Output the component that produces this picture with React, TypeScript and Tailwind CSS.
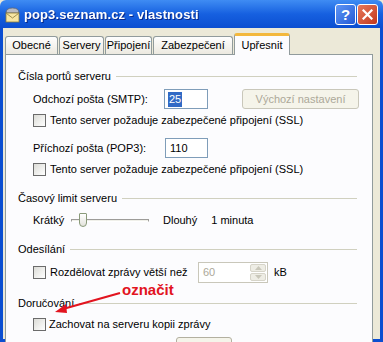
import React from 'react';

const font = { fontFamily: '"Liberation Sans", Arial, sans-serif' };

const Checkbox: React.FC = () => (
  <span className="inline-block w-[13px] h-[13px] border border-[#6b6b6b] bg-gradient-to-br from-[#dcdcd7] to-[#ffffff] shrink-0" />
);

const GroupLabel: React.FC<{ text: string; mt: string }> = ({ text, mt }) => (
  <div className={`flex items-center h-[18px] pl-[12px] pr-[15px] ${mt}`}>
    <span className="text-black pr-[5px] whitespace-nowrap">{text}</span>
    <span className="flex-1 h-px bg-[#d0d0bf]" />
  </div>
);

const Tab: React.FC<{ label: string; selected?: boolean; w: string }> = ({ label, selected, w }) =>
  selected ? (
    <div className={`${w} h-[22px] -mb-px relative z-10 bg-[#fcfcfe] border border-b-0 border-[#919b9c] border-t-[3px] border-t-[#f3b83d] rounded-t-[3px] flex items-center justify-center text-black`}>
      {label}
    </div>
  ) : (
    <div className={`${w} h-[18px] mt-[4px] bg-gradient-to-b from-[#fefefe] to-[#ece9e0] border border-b-0 border-[#919b9c] rounded-t-[3px] flex items-center justify-center text-black`}>
      {label}
    </div>
  );

export default function App() {
  return (
    <div style={font} className="w-[383px] h-[342px] overflow-hidden relative bg-[#ece9d8] text-[11px] leading-none select-none">
      {/* title bar */}
      <div className="h-[28px] flex items-center bg-gradient-to-b from-[#3f8cf3] via-[#1660e0] to-[#0b4ed1] rounded-t-[6px] pl-[4px] pr-[5px]">
        <svg width="17" height="17" viewBox="0 0 17 17" className="shrink-0">
          <path d="M2 7 Q2 2 8.5 2 Q15 2 15 7 Z" fill="#b9bcc4" stroke="#5d6470" strokeWidth="0.8" />
          <rect x="2" y="7" width="13" height="9" fill="#f7e6a2" stroke="#8a7a3a" strokeWidth="0.8" />
          <path d="M2.4 7.4 L8.5 12 L14.6 7.4" fill="none" stroke="#8a7a3a" strokeWidth="0.8" />
        </svg>
        <span className="ml-[3px] text-white font-bold text-[13px] tracking-[0.1px] drop-shadow-[1px_1px_0_#0a2a8a]">
          pop3.seznam.cz - vlastnosti
        </span>
        <div className="ml-auto flex gap-[1px]">
          <div className="w-[21px] h-[21px] rounded-[3px] border border-white bg-gradient-to-br from-[#5f96f5] to-[#2459d5] flex items-center justify-center text-white font-bold text-[15px]">
            ?
          </div>
          <div className="w-[21px] h-[21px] rounded-[3px] border border-white bg-gradient-to-br from-[#e8785a] to-[#c1361c] flex items-center justify-center">
            <svg width="11" height="11" viewBox="0 0 11 11">
              <path d="M1.5 1.5 L9.5 9.5 M9.5 1.5 L1.5 9.5" stroke="white" strokeWidth="2.2" strokeLinecap="square" />
            </svg>
          </div>
        </div>
      </div>

      {/* window body */}
      <div className="h-[314px] border-x-[3px] border-b-[3px] border-[#0b4ed1] flex flex-col">
        {/* tabs */}
        <div className="flex items-end pl-[2px] pt-[4px] gap-[1px]">
          <Tab label="Obecné" w="w-[53px]" />
          <Tab label="Servery" w="w-[45px]" />
          <Tab label="Připojení" w="w-[47px]" />
          <Tab label="Zabezpečení" w="w-[80px]" />
          <Tab label="Upřesnit" w="w-[56px]" selected />
        </div>

        {/* tab panel */}
        <div className="ml-[2px] mr-[7px] flex-1 bg-[#fcfcfe] border border-[#919b9c] border-b-0 pt-[12px]">
          <GroupLabel text="Čísla portů serveru" mt="mt-0" />

          <div className="flex items-center h-[20px] mt-[4px] pl-[27px]">
            <span className="w-[131px]">Odchozí pošta (SMTP):</span>
            <div className="w-[44px] h-[20px] border border-[#7f9db9] bg-white flex items-center pl-[3px]">
              <span className="bg-[#316ac5] text-white px-px py-[2px]">25</span>
            </div>
            <div className="ml-[34px] w-[117px] h-[20px] rounded-[3px] border border-[#c9c7ba] bg-[#f5f4ea] flex items-center justify-center text-[#aca899]">
              Výchozí nastavení
            </div>
          </div>

          <div className="flex items-center h-[18px] mt-[2px] pl-[27px] gap-[4px]">
            <Checkbox />
            <span>Tento server požaduje zabezpečené připojení (SSL)</span>
          </div>

          <div className="flex items-center h-[20px] mt-[9px] pl-[27px]">
            <span className="w-[132px]">Příchozí pošta (POP3):</span>
            <div className="w-[43px] h-[20px] border border-[#7f9db9] bg-white flex items-center pl-[4px]">110</div>
          </div>

          <div className="flex items-center h-[18px] mt-[2px] pl-[27px] gap-[4px]">
            <Checkbox />
            <span>Tento server požaduje zabezpečené připojení (SSL)</span>
          </div>

          <GroupLabel text="Časový limit serveru" mt="mt-[11px]" />

          <div className="flex items-center h-[18px] mt-[4px] pl-[27px]">
            <span className="w-[38px]">Krátký</span>
            <div className="relative w-[78px] h-[16px] flex items-center">
              <div className="w-full h-[3px] border border-[#9d9c99] border-b-white bg-[#f0f0ea]" />
              <div className="absolute left-[8px] top-[1px] w-[8px] h-[14px] rounded-b-[4px] rounded-t-[1px] border border-[#8a9a7a] bg-gradient-to-b from-white to-[#e3e3dc]" />
            </div>
            <span className="ml-[14px]">Dlouhý</span>
            <span className="ml-[14px]">1 minuta</span>
          </div>

          <GroupLabel text="Odesílání" mt="mt-[11px]" />

          <div className="flex items-center h-[21px] mt-[4px] pl-[27px]">
            <Checkbox />
            <span className="ml-[4px] w-[148px]">Rozdělovat zprávy větší než</span>
            <div className="w-[70px] h-[21px] border border-[#c9c7ba] bg-white flex items-center">
              <span className="pl-[4px] text-[#aca899] flex-1">60</span>
              <div className="w-[16px] h-[17px] mr-[1px] flex flex-col gap-px">
                <div className="flex-1 rounded-[2px] bg-[#eeede5] border border-[#d6d4c9] flex items-center justify-center">
                  <svg width="7" height="4" viewBox="0 0 7 4"><path d="M0 4 L3.5 0 L7 4Z" fill="#c9c7ba" /></svg>
                </div>
                <div className="flex-1 rounded-[2px] bg-[#eeede5] border border-[#d6d4c9] flex items-center justify-center">
                  <svg width="7" height="4" viewBox="0 0 7 4"><path d="M0 0 L3.5 4 L7 0Z" fill="#c9c7ba" /></svg>
                </div>
              </div>
            </div>
            <span className="ml-[6px]">kB</span>
          </div>

          <GroupLabel text="Doručování" mt="mt-[11px]" />

          <div className="flex items-center h-[18px] mt-[3px] pl-[27px] gap-[3px]">
            <Checkbox />
            <span>Zachovat na serveru kopii zprávy</span>
          </div>

          <div className="ml-[170px] mt-[4px] w-[56px] h-[20px] rounded-[3px] border border-[#b3b0a0] bg-[#f5f4ea]" />
        </div>
      </div>

      {/* annotation */}
      <span className="absolute left-[122px] top-[282px] text-[#e2141f] font-bold text-[15px]">označit</span>
      <svg className="absolute left-0 top-0 pointer-events-none" width="383" height="342">
        <path d="M120 293 L63 309" stroke="#e2141f" strokeWidth="2.2" />
        <path d="M55 312 L66 304 L67 313 Z" fill="#e2141f" />
      </svg>
    </div>
  );
}
